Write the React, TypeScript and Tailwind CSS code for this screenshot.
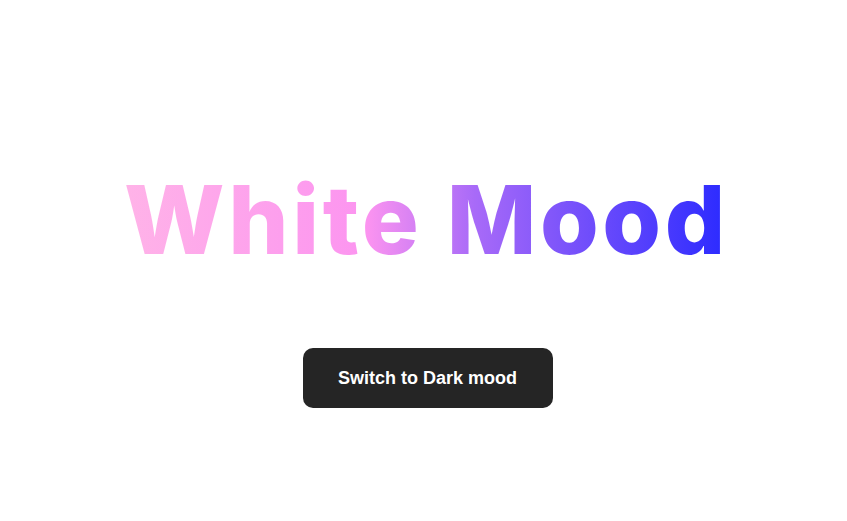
export default function App() {
  return (
    <div className="flex min-h-screen w-full flex-col items-center bg-white pt-[172px]">
      <h1 className="ml-[6px] bg-[linear-gradient(to_right,#ffb3e8,#fc94f0_40%,#a86af8_58%,#2a2aff)] bg-clip-text font-['Inter',sans-serif] text-[95px] font-extrabold leading-none tracking-[3.6px] text-transparent">
        White Mood
      </h1>
      <button
        type="button"
        className="ml-[8px] mt-[81px] h-[60px] w-[250px] rounded-[10px] bg-[#252525] font-['Liberation_Sans',Arial,sans-serif] text-[18px] font-bold text-white"
      >
        Switch to Dark mood
      </button>
    </div>
  );
}
